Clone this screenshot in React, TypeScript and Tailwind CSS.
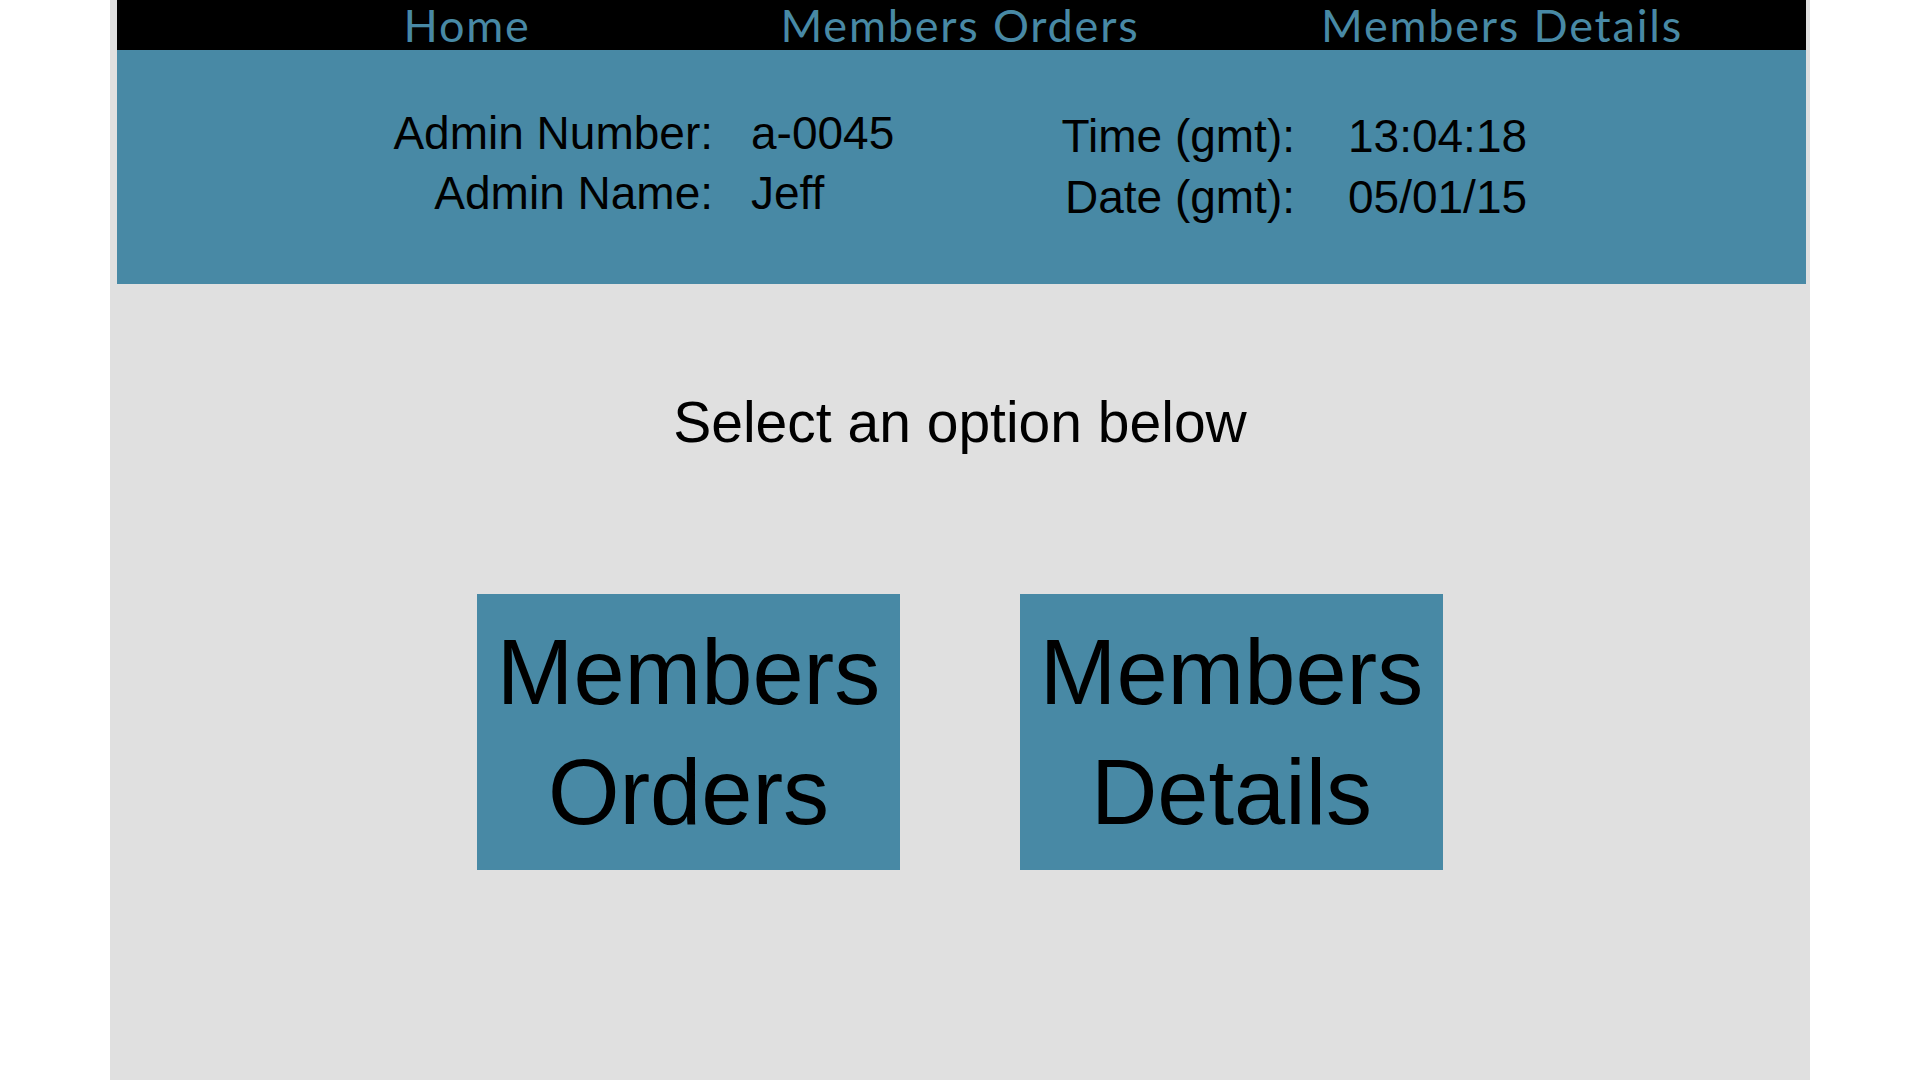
import React from 'react';

const navItems = ['Home', 'Members Orders', 'Members Details'];

function InfoRow({ label, value }: { label: string; value: string }) {
  return (
    <>
      <span className="text-right">{label}</span>
      <span>{value}</span>
    </>
  );
}

export default function App() {
  return (
    <div className="min-h-screen w-full bg-white">
      <div className="mx-auto flex min-h-screen w-[1700px] flex-col bg-[#e0e0e0] font-['Liberation_Sans',Arial,sans-serif] text-black">
        {/* Top navigation */}
        <nav className="ml-[7px] mr-[4px] flex h-[50px] items-start bg-black pl-[150px] font-['Lato',sans-serif] text-[45px] leading-[50px] tracking-[1.8px] text-[#4889a5]">
          <a className="w-[400px] text-center">{navItems[0]}</a>
          <a className="ml-[93px] w-[400px] text-center">{navItems[1]}</a>
          <a className="ml-[142px] w-[400px] text-center">{navItems[2]}</a>
        </nav>

        {/* Admin info panel */}
        <header className="ml-[7px] mr-[4px] flex h-[234px] items-start bg-[#4889a5] pl-[256px] pt-[53px] text-[46px] leading-[60px]">
          <div className="grid grid-cols-[340px_200px] gap-x-[38px]">
            <InfoRow label="Admin Number:" value="a-0045" />
            <InfoRow label="Admin Name:" value="Jeff" />
          </div>
          <div className="ml-[84px] mt-[3px] grid grid-cols-[260px_200px] gap-x-[53px] leading-[61px]">
            <InfoRow label="Time (gmt):" value="13:04:18" />
            <InfoRow label="Date (gmt):" value="05/01/15" />
          </div>
        </header>

        {/* Options */}
        <main className="flex flex-col items-center">
          <p className="mt-[106px] text-[57px] leading-[64px]">Select an option below</p>
          <div className="mt-[140px] flex gap-[120px]">
            <button className="flex h-[276px] w-[423px] items-center justify-center bg-[#4889a5] text-[92px] leading-[120px]">
              <span>
                Members
                <br />
                Orders
              </span>
            </button>
            <button className="flex h-[276px] w-[423px] items-center justify-center bg-[#4889a5] text-[92px] leading-[120px]">
              <span>
                Members
                <br />
                Details
              </span>
            </button>
          </div>
        </main>
      </div>
    </div>
  );
}
